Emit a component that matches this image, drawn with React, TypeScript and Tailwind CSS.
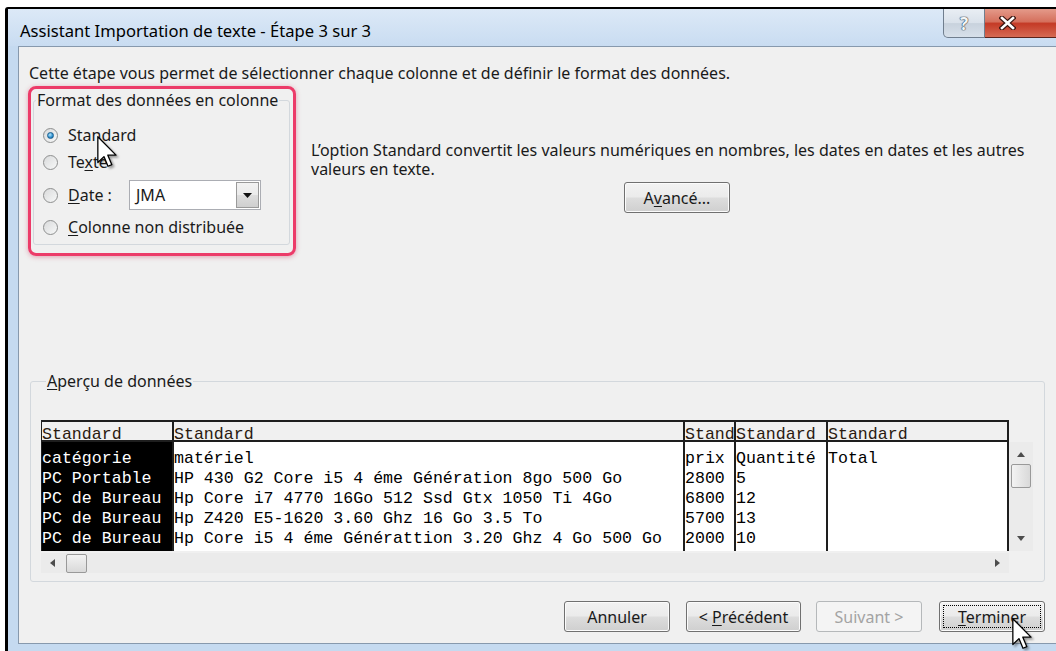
import React from 'react';

const HEADERS = ['Standard', 'Standard', 'Standard', 'Standard', 'Standard'];

const ROWS = [
  ['catégorie', 'matériel', 'prix', 'Quantité', 'Total'],
  ['PC Portable', 'HP 430 G2 Core i5 4 éme Génération 8go 500 Go', '2800', '5', ''],
  ['PC de Bureau', 'Hp Core i7 4770 16Go 512 Ssd Gtx 1050 Ti 4Go', '6800', '12', ''],
  ['PC de Bureau', 'Hp Z420 E5-1620 3.60 Ghz 16 Go 3.5 To', '5700', '13', ''],
  ['PC de Bureau', 'Hp Core i5 4 éme Générattion 3.20 Ghz 4 Go 500 Go', '2000', '10', ''],
];

// column widths include the 2px right rule
const COLS = ['w-[132px]', 'w-[511px]', 'w-[51px]', 'w-[92px]', 'w-[181px]'];

const winBtn =
  'h-[31px] rounded-[3px] border border-[#707070] bg-[linear-gradient(#f2f2f2,#ebebeb_48%,#dddddd_52%,#cfcfcf)] shadow-[inset_0_0_0_1px_#fbfbfb] text-[16px] text-[#1a1a1a] flex items-center justify-center';

function Radio({ checked }: { checked?: boolean }) {
  return (
    <span className="w-[15px] h-[15px] rounded-full border border-[#8e8f8f] bg-[linear-gradient(135deg,#d9dadb,#f7f8f8)] flex items-center justify-center shrink-0">
      {checked && (
        <span className="w-[7px] h-[7px] rounded-full bg-[radial-gradient(circle_at_40%_35%,#b8e6fb,#2c8fd0_60%,#125a8c)] border border-[#1b5f8e]" />
      )}
    </span>
  );
}

function Cursor({ className }: { className: string }) {
  return (
    <svg
      className={`absolute drop-shadow-[2px_2px_1px_rgba(0,0,0,0.35)] ${className}`}
      width="21"
      height="33"
      viewBox="0 0 13 20.5"
    >
      <path
        d="M0.5 0.5 L0.5 16.5 L4.3 12.8 L6.8 18.8 L9.2 17.8 L6.7 11.9 L11.8 11.9 Z"
        fill="#fff"
        stroke="#000"
        strokeWidth="0.8"
        strokeLinejoin="round"
      />
    </svg>
  );
}

function Arrow({ dir }: { dir: 'up' | 'down' | 'left' | 'right' }) {
  const pts = {
    up: '0,5 4,0 8,5',
    down: '0,0 8,0 4,5',
    left: '5,0 5,8 0,4',
    right: '0,0 5,4 0,8',
  }[dir];
  const vert = dir === 'up' || dir === 'down';
  return (
    <svg width={vert ? 8 : 5} height={vert ? 5 : 8} viewBox={vert ? '0 0 8 5' : '0 0 5 8'}>
      <polygon points={pts} fill="#4d4d4d" />
    </svg>
  );
}

export default function App() {
  return (
    <div className="relative w-[1056px] h-[651px] overflow-hidden bg-white pl-[5px] pt-[7px] font-['Noto_Sans','Open_Sans',sans-serif] text-[#1a1a1a]">
      <div className="h-full border-l-[3px] border-t-2 border-black rounded-tl-[3px] flex flex-col bg-[#c5daf0]">
        {/* title bar */}
        <div className="h-[37px] shrink-0 flex bg-linear-to-b from-[#dce9f7] to-[#c9dcf1]">
          <span className="pl-[12px] pt-[12px] leading-[20px] text-[16.6px] text-black">
            Assistant Importation de texte - Étape 3 sur 3
          </span>
          <div className="ml-auto mr-[-11px] flex items-start">
            <div className="w-[42px] h-[29px] rounded-bl-[5px] border border-t-0 border-[#707e8e] bg-[linear-gradient(#e9eef4,#d9e1ea_50%,#c8d2dd_52%,#d7e0ea)] flex items-center justify-center">
              <span className="text-[17px] font-bold text-[#f4f6f8] leading-none [text-shadow:0_0_1px_#2b3a4a,0_0_1px_#2b3a4a,0_0_1px_#2b3a4a]">
                ?
              </span>
            </div>
            <div className="w-[82px] h-[29px] border border-t-0 border-l-0 border-[#5b231b] bg-[linear-gradient(#e49a8a,#d5705d_45%,#c43a26_52%,#d66a53)] flex items-center justify-start pl-[14px]">
              <svg width="17" height="14" viewBox="0 0 17 14">
                <path d="M3 2 L14 12 M14 2 L3 12" stroke="#3a1510" strokeWidth="5" strokeLinecap="square" />
                <path d="M3 2 L14 12 M14 2 L3 12" stroke="#fff" strokeWidth="2.6" strokeLinecap="square" />
              </svg>
            </div>
          </div>
        </div>

        {/* client area */}
        <div className="flex-1 flex pl-[10px] pb-[7px]">
          <div className="flex-1 bg-[#f0f0f0] border-l border-t border-b border-[#8799ad] pl-[10px] text-[16px]">
            <div className="w-[1016px] flex flex-col">
              <p className="mt-[17px] leading-[19px]">
                Cette étape vous permet de sélectionner chaque colonne et de définir le format des données.
              </p>

              <div className="mt-[3px] h-[170px] flex">
                {/* column format group, highlighted */}
                <div className="-ml-[1px] w-[268px] h-[170px] rounded-[8px] border-[3px] border-[#ec3b69] shadow-[0_1px_5px_rgba(200,40,80,0.4)]">
                  <fieldset className="mt-[2px] ml-[2px] w-[257px] h-[154px] border border-[#d3d8dd] rounded-[3px]">
                    <legend className="ml-[2px] px-[1px] leading-[19px]">Format des données en colonne</legend>
                    <div className="pl-[9px] mt-[12px] leading-[19px]">
                      <div className="h-[27px] flex items-center gap-[10px]">
                        <Radio checked />
                        <span>Standard</span>
                      </div>
                      <div className="h-[27px] flex items-center gap-[10px]">
                        <Radio />
                        <span>
                          Te<span className="underline underline-offset-2">x</span>te
                        </span>
                      </div>
                      <div className="h-[38px] flex items-center gap-[10px]">
                        <Radio />
                        <span className="w-[61px]">
                          <span className="underline underline-offset-2">D</span>ate :
                        </span>
                        <div className="-ml-[10px] w-[132px] h-[30px] border border-[#abadb3] bg-white flex">
                          <span className="flex-1 pl-[6px] leading-[28px]">JMA</span>
                          <div className="w-[23px] m-[1px] border border-[#9a9a9a] bg-[linear-gradient(#f2f2f2,#ebebeb_48%,#dddddd_52%,#cfcfcf)] flex items-center justify-center">
                            <svg width="9" height="5" viewBox="0 0 9 5">
                              <polygon points="0,0 9,0 4.5,5" fill="#111" />
                            </svg>
                          </div>
                        </div>
                      </div>
                      <div className="h-[27px] flex items-center gap-[10px]">
                        <Radio />
                        <span>
                          <span className="underline underline-offset-2">C</span>olonne non distribuée
                        </span>
                      </div>
                    </div>
                  </fieldset>
                </div>

                <div className="ml-[15px] w-[732px] flex flex-col">
                  <p className="mt-[55px] leading-[19px]">
                    L’option Standard convertit les valeurs numériques en nombres, les dates en dates et les autres
                    <br />
                    valeurs en texte.
                  </p>
                  <div className={`${winBtn} mt-[3px] self-center w-[106px]`}>
                    <span>
                      A<span className="underline underline-offset-2">v</span>ancé...
                    </span>
                  </div>
                </div>
              </div>

              {/* data preview */}
              <fieldset className="mt-[116px] ml-[1px] w-[1015px] border border-[#d3d8dd] rounded-[3px] pl-[10px] pb-[8px]">
                <legend className="ml-[5px] px-[1px] leading-[19px]">
                  <span className="underline underline-offset-2">A</span>perçu de données
                </legend>
                <div className="mt-[29px] font-['Liberation_Mono','Courier_New',monospace] text-[16.6px]">
                  <div className="flex h-[22px] w-[968px] border-t-2 border-b-2 border-l border-[#1e1e1e] bg-[#f0f0f0]">
                    {HEADERS.map((h, i) => (
                      <div
                        key={i}
                        className={`${COLS[i]} h-full border-r-2 border-[#1e1e1e] overflow-hidden whitespace-pre leading-[25px] text-[#2a1a10]`}
                      >
                        {h}
                      </div>
                    ))}
                  </div>
                  <div className="flex h-[109px]">
                    <div className="w-[968px] h-full overflow-hidden border-l border-[#1e1e1e] bg-white flex">
                      {COLS.map((w, c) => (
                        <div
                          key={c}
                          className={`${w} h-full pt-[7px] border-r-2 border-[#1e1e1e] overflow-hidden ${
                            c === 0 ? 'bg-black text-white' : 'text-black'
                          }`}
                        >
                          {ROWS.map((r, i) => (
                            <div key={i} className="h-[20px] leading-[20px] whitespace-pre">
                              {r[c]}
                            </div>
                          ))}
                        </div>
                      ))}
                    </div>
                    {/* vertical scrollbar */}
                    <div className="w-[24px] h-full bg-[#ebebeb] flex flex-col items-center pt-[10px] pb-[10px]">
                      <Arrow dir="up" />
                      <div className="mt-[7px] w-[20px] h-[24px] rounded-[2px] border border-[#999] bg-linear-to-r from-[#f3f3f3] to-[#d9d9d9]" />
                      <div className="flex-1" />
                      <Arrow dir="down" />
                    </div>
                  </div>
                  {/* horizontal scrollbar */}
                  <div className="mt-[2px] w-[968px] h-[20px] bg-[#ebebeb] flex items-center pl-[9px] pr-[9px]">
                    <Arrow dir="left" />
                    <div className="ml-[11px] w-[21px] h-[19px] rounded-[2px] border border-[#999] bg-linear-to-b from-[#f3f3f3] to-[#d9d9d9]" />
                    <div className="flex-1" />
                    <Arrow dir="right" />
                  </div>
                </div>
              </fieldset>

              {/* wizard buttons */}
              <div className="mt-[19px] flex justify-end">
                <div className={`${winBtn} w-[106px]`}>Annuler</div>
                <div className={`${winBtn} ml-[16px] w-[115px]`}>
                  <span>
                    &lt; <span className="underline underline-offset-2">P</span>récédent
                  </span>
                </div>
                <div className="ml-[15px] w-[106px] h-[31px] rounded-[3px] border border-[#b5b8ba] bg-[#f4f4f4] text-[16px] text-[#a3a3a3] flex items-center justify-center">
                  Suivant &gt;
                </div>
                <div
                  className={`${winBtn} ml-[17px] w-[106px] border-[#3c7fb1] shadow-[0_0_2px_1px_#8fd0f5,inset_0_0_0_1px_#fbfbfb] p-[3px]`}
                >
                  <span className="w-full h-full border border-dotted border-black flex items-center justify-center">
                    <span>
                      <span className="underline underline-offset-2">T</span>erminer
                    </span>
                  </span>
                </div>
              </div>
            </div>
          </div>
        </div>
      </div>

      <Cursor className="left-[97px] top-[136px]" />
      <Cursor className="left-[1012px] top-[618px]" />
    </div>
  );
}
